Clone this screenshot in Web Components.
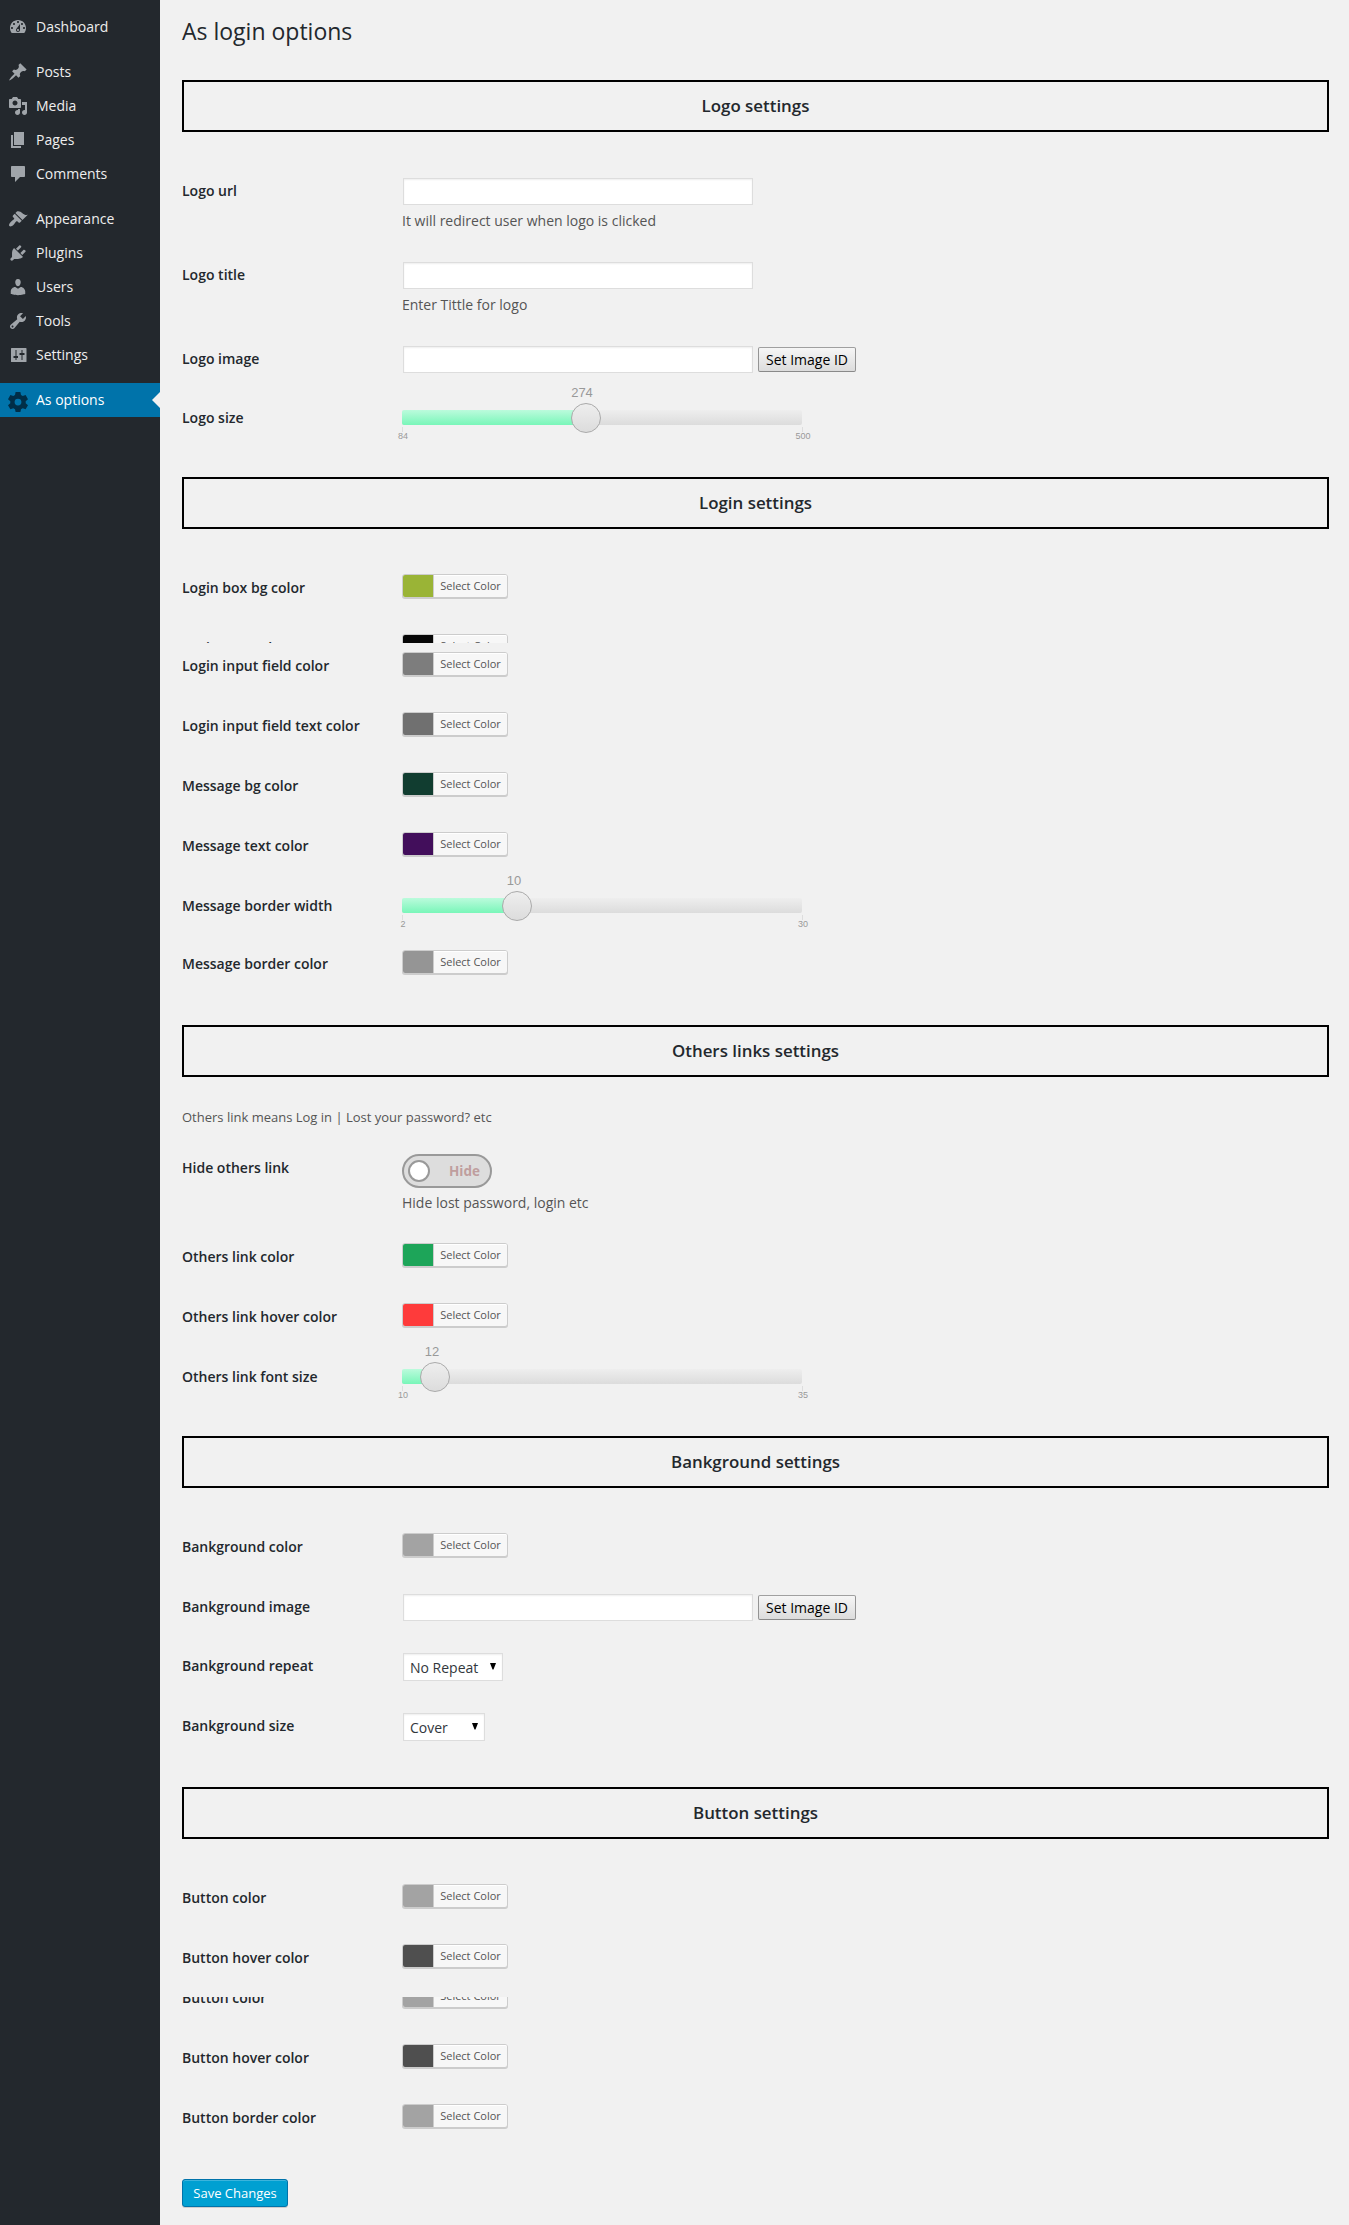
<!DOCTYPE html>
<html lang="en">
<head>
<meta charset="utf-8">
<title>As login options</title>
<style>
html,body{margin:0;padding:0}
body{background:#f1f1f1;font:14px/18px "Open Sans",sans-serif;color:#23282d}
</style>
</head>
<body>
<admin-page></admin-page>
<script>
const define=(name,css,html,setup)=>customElements.define(name,class extends HTMLElement{
  constructor(){
    super();
    this.attachShadow({mode:'open'});
  }
  connectedCallback(){
    if(this.shadowRoot.firstChild)return;
    this.shadowRoot.innerHTML='<style>*{box-sizing:border-box}'+css+'</style>'+(typeof html==='function'?html(this):html);
    if(setup)setup(this,this.shadowRoot);
  }
});

const ICONS={
dashboard:'M3.76 16h12.48c1.1-1.37 1.76-3.11 1.76-5 0-4.42-3.58-8-8-8s-8 3.58-8 8c0 1.89.66 3.63 1.76 5zM10 4c.55 0 1 .45 1 1s-.45 1-1 1-1-.45-1-1 .45-1 1-1zM6 6c.55 0 1 .45 1 1s-.45 1-1 1-1-.45-1-1 .45-1 1-1zm8 0c.55 0 1 .45 1 1s-.45 1-1 1-1-.45-1-1 .45-1 1-1zm-5.37 5.55L12 7v6c0 1.1-.9 2-2 2s-2-.9-2-2c0-.57.24-1.08.63-1.45zM4 10c.55 0 1 .45 1 1s-.45 1-1 1-1-.45-1-1 .45-1 1-1zm12 0c.55 0 1 .45 1 1s-.45 1-1 1-1-.45-1-1 .45-1 1-1zm-5 3c0-.55-.45-1-1-1s-1 .45-1 1 .45 1 1 1 1-.45 1-1z',
post:'M10.44 3.02l1.82-1.82 6.36 6.35-1.83 1.82c-1.05-.68-2.48-.57-3.41.36l-.75.75c-.92.93-1.04 2.35-.35 3.41l-1.83 1.82-2.41-2.41-2.8 2.79c-.42.42-3.38 2.71-3.8 2.29s1.86-3.39 2.28-3.81l2.79-2.79L4.1 9.36l1.83-1.82c1.05.69 2.48.57 3.4-.36l.75-.75c.93-.92 1.05-2.35.36-3.41z',
media:'M13 11V4c0-.55-.45-1-1-1h-1.67L9 1H5L3.67 3H2c-.55 0-1 .45-1 1v7c0 .55.45 1 1 1h10c.55 0 1-.45 1-1zM7 4.5c1.38 0 2.5 1.12 2.5 2.5S8.38 9.5 7 9.5 4.5 8.38 4.5 7 5.62 4.5 7 4.5zM14 6h5v10.5c0 1.38-1.12 2.5-2.5 2.5S14 17.88 14 16.5s1.12-2.5 2.5-2.5c.17 0 .34.02.5.05V9h-3V6zm-4 8.05V13h2v3.5c0 1.38-1.12 2.5-2.5 2.5S7 17.88 7 16.5 8.12 14 9.5 14c.17 0 .34.02.5.05z',
page:'M6 15V2h10v13H6zm-1 1h8v2H3V5h2v11z',
comments:'M4 2h12c.55 0 1 .45 1 1v9c0 .55-.45 1-1 1h-4l-5 5v-5H4c-.55 0-1-.45-1-1V3c0-.55.45-1 1-1z',
appearance:'M14.48 11.06L7.41 3.99l1.5-1.5c.5-.56 2.3-.47 3.51.32 1.21.8 1.43 1.28 2.91 2.1 1.18.64 2.45 1.26 4.45.85zm-.71.71L6.7 4.7 4.93 6.47c-.39.39-.39 1.02 0 1.41l1.06 1.06c.39.39.39 1.03 0 1.42-.6.6-1.43 1.11-2.21 1.69-.35.26-.7.53-1.01.84C1.43 14.23.4 16.08 1.4 17.07c.99 1 2.84-.03 4.18-1.36.31-.31.58-.66.85-1.02.57-.78 1.08-1.61 1.69-2.21.39-.39 1.02-.39 1.41 0l1.06 1.06c.39.39 1.02.39 1.41 0z',
plugins:'M13.11 4.36L9.87 7.6 8 5.73l3.24-3.24c.35-.34 1.05-.2 1.56.32.52.51.66 1.21.31 1.55zm-8 1.77l.91-1.12 9.01 9.01-1.19.84c-.71.71-2.63 1.16-3.82 1.16H6.14L4.9 17.26c-.59.59-1.54.59-2.12 0-.59-.58-.59-1.53 0-2.12l1.24-1.24v-3.88c0-1.13.4-3.19 1.09-3.89zm7.26 3.97l3.24-3.24c.34-.35 1.04-.21 1.55.31.52.51.66 1.21.31 1.55l-3.24 3.25z',
users:'M10 9.25c-2.27 0-2.73-3.44-2.73-3.44C7 4.02 7.82 2 9.97 2c2.16 0 2.98 2.02 2.71 3.81 0 0-.41 3.44-2.68 3.44zm0 2.57L12.72 10c2.39 0 4.52 2.33 4.52 4.53v2.49s-3.65 1.13-7.24 1.13c-3.65 0-7.24-1.13-7.24-1.13v-2.49c0-2.25 1.94-4.48 4.47-4.48z',
tools:'M16.68 9.77c-1.34 1.34-3.3 1.67-4.95.99l-5.41 6.52c-.99.99-2.59.99-3.58 0s-.99-2.59 0-3.57l6.52-5.42c-.68-1.65-.35-3.61.99-4.95 1.28-1.28 3.12-1.62 4.72-1.06l-2.89 2.89 2.82 2.82 2.86-2.87c.53 1.58.18 3.39-1.08 4.65zM3.81 16.21c.4.39 1.04.39 1.43 0 .4-.4.4-1.04 0-1.43-.39-.4-1.03-.4-1.43 0-.39.39-.39 1.03 0 1.43z',
settings:'M18.500 16.400V3.600c0-.35-.25-.6-.6-.6H3.600c-.35 0-.6.25-.6.6v12.800c0 .35.25.6.6.6h14.300c.35 0 .6-.25.6-.6zM8.500 11h1.500v2H8.500v2H7.500v-2H5.500v-2h2V5h1v6zm6-3h2v2h-2v5h-1v-5h-2V8h2V5h1v3z',
gear:'M7.6 0h4.8l.6 3 1.7 1 2.9-1L20 7.2 17.7 9.200v2L20 13.200l-2.400 4.100-2.900-1-1.700 1L12.400 20H7.600L7 17.300l-1.700-1-2.900 1L0 13.200l2.300-2v-2L0 7.200 2.400 3l2.900 1L7 3zM10 6.700a3.400 3.400 0 1 0 0 6.800 3.400 3.400 0 0 0 0-6.800z'
};

define('menu-item',`
:host{display:flex;height:34px;align-items:flex-start;padding:7px 0 0 8px;box-sizing:border-box;color:#eee;--ic:#a0a5aa}
:host([gap]){margin-top:11px}
:host([active]){background:#0073aa;color:#fff;--ic:#002e48}
svg{width:20px;height:20px;fill:var(--ic);flex:none;display:block}
:host([active]) svg{margin-top:2px}
span{margin-left:8px;line-height:20px;flex:1}
i{display:none;width:0;height:0;border:8px solid transparent;border-right-color:#f1f1f1;border-left:0;margin-top:2px}
:host([active]) i{display:block}`,
e=>`<svg viewBox="0 0 20 20"><path fill-rule="evenodd" d="${ICONS[e.getAttribute('icon')]}"/></svg><span><slot></slot></span><i></i>`);

define('side-menu',`
:host{display:block;width:160px;flex:none;background:#23282d;padding-top:10px;box-sizing:border-box}`,
`<menu-item icon="dashboard">Dashboard</menu-item>
<menu-item icon="post" gap>Posts</menu-item>
<menu-item icon="media">Media</menu-item>
<menu-item icon="page">Pages</menu-item>
<menu-item icon="comments">Comments</menu-item>
<menu-item icon="appearance" gap>Appearance</menu-item>
<menu-item icon="plugins">Plugins</menu-item>
<menu-item icon="users">Users</menu-item>
<menu-item icon="tools">Tools</menu-item>
<menu-item icon="settings">Settings</menu-item>
<menu-item icon="gear" gap active>As options</menu-item>`);

define('option-section',`
:host{display:block;margin-bottom:31px}
h3{margin:0 0 29px;height:52px;border:2px solid #000;font-size:16.9px;line-height:48px;font-weight:600;text-align:center}
:host([note]) h3{margin-bottom:28px}
p{margin:0;height:33px;font-size:13px;line-height:24px;color:#555}`,
e=>`<h3>${e.getAttribute('heading')}</h3>${e.hasAttribute('note')?`<p>${e.getAttribute('note')}</p>`:''}<slot></slot>`);

define('option-row',`
:host{display:flow-root;height:60px}
:host([cut]){overflow:hidden}
div{display:flex;margin-top:var(--shift,0)}
label{width:220px;flex:none;padding-top:21px;font-weight:600}
section{padding-top:16px;flex:1}`,
e=>`<div><label>${e.getAttribute('label')}</label><section><slot></slot></section></div>`,
e=>{if(e.hasAttribute('h'))e.style.height=e.getAttribute('h')+'px';});

define('text-field',`
:host{display:block;padding:1px}
div{display:flex;gap:5px;align-items:flex-start}
input{width:350px;height:27px;margin:0;border:1px solid #ddd;background:#fff;box-shadow:inset 0 1px 2px rgba(0,0,0,.07);padding:3px 5px}
button{width:98px;height:25px;padding:0;margin:1px 0 0;border:1px solid;border-color:#a0a0a0 #949494 #8a8a8a #949494;border-radius:2px;background:linear-gradient(#f6f6f6,#dcdcdc);font:14px/20px "Open Sans",sans-serif;color:#000;white-space:nowrap}
p{margin:6px 0 0 -1px;line-height:20px;color:#555}`,
e=>`<div><input type="text">${e.hasAttribute('button')?`<button>${e.getAttribute('button')}</button>`:''}</div>${e.hasAttribute('hint')?`<p>${e.getAttribute('hint')}</p>`:''}`);

define('color-button',`
:host{display:block}
div{display:flex;width:106px;height:24px;border:1px solid #ccc;border-radius:3px;box-shadow:0 1px 0 #ccc;background:#f7f7f7}
b{width:30px;border-radius:2px 0 0 2px}
span{flex:1;border-left:1px solid #ccc;border-radius:0 2px 2px 0;box-shadow:inset 0 1px 0 #fff;text-align:center;font-size:11px;line-height:22px;color:#555;white-space:nowrap}`,
e=>`<div><b style="background:${e.getAttribute('value')}"></b><span>Select Color</span></div>`);

define('range-slider',`
:host{display:block;width:400px;padding-top:6px}
.track{position:relative;height:15px;border-radius:2px;background:linear-gradient(#eee,#dcdcdc);font-family:"Liberation Sans",Arial,sans-serif;color:#999}
.fill{height:15px;border-radius:2px 0 0 2px;background:linear-gradient(#bbfbdc,#79f6b9)}
.knob{position:absolute;top:-7px;width:30px;height:30px;border:1px solid #aaa;border-radius:50%;background:linear-gradient(#eee,#dcdcdc)}
.val{position:absolute;top:-25px;font-size:13px;line-height:16px;transform:translateX(-50%)}
.ends{display:flex;justify-content:space-between;margin:2px -31px 0 -29px;font-size:9px;line-height:10px}
.ends span{width:60px;text-align:center;padding-top:4px;background:linear-gradient(#ddd,#ddd) 29px 0/1px 5px no-repeat}`,
e=>{const g=n=>e.getAttribute(n),x=+g('x');
return `<div class="track"><div class="fill" style="width:${x+15}px"></div><div class="knob" style="left:${x}px"></div><div class="val" style="left:${g('vx')}px">${g('value')}</div><div class="ends"><span>${g('min')}</span><span>${g('max')}</span></div></div>`});

define('toggle-switch',`
:host{display:block}
div{display:flex;align-items:center;width:90px;height:34px;border:2px solid #999;border-radius:17px;background:#ddd;padding:0 10px 0 4px;justify-content:space-between}
i{width:22px;height:22px;border:2px solid #999;border-radius:50%;background:#fff}
b{font-size:13.5px;color:#bf9e9e}
p{margin:5px 0 0;line-height:20px;color:#555}`,
`<div><i></i><b>Hide</b></div><p><slot></slot></p>`);

define('drop-down',`
:host{display:block;padding:1px}
div{display:flex;align-items:center;justify-content:space-between;height:28px;border:1px solid #ddd;background:#fff;box-shadow:inset 0 1px 2px rgba(0,0,0,.07);padding:2px 6px 0;color:#32373c}
svg{width:6px;height:7px;display:block;margin-top:-3px}`,
e=>`<div style="width:${e.getAttribute('w')}px"><span><slot></slot></span><svg viewBox="0 0 6 7"><path d="M0 0h6L3.500 6.500h-1z"/></svg></div>`);

define('save-button',`
:host{display:block}
button{display:block;width:106px;height:28px;margin:0;padding:0;border:1px solid #0073aa;border-radius:3px;background:#00a0d2;box-shadow:inset 0 1px 0 rgba(120,200,230,.5),0 1px 0 rgba(0,0,0,.15);color:#fff;font:500 13px/26px "Open Sans",sans-serif}`,
`<button><slot></slot></button>`);

define('admin-page',`
:host{display:flex;width:1349px;height:2225px;overflow:hidden}
main{flex:1;padding:0 20px 0 22px;min-width:0}
h1{margin:0;height:80px;padding-top:17px;font-size:23px;line-height:29px;font-weight:400}`,
`<side-menu></side-menu>
<main>
<h1>As login options</h1>
<option-section heading="Logo settings">
 <option-row label="Logo url" h="84"><text-field hint="It will redirect user when logo is clicked"></text-field></option-row>
 <option-row label="Logo title" h="84"><text-field hint="Enter Tittle for logo"></text-field></option-row>
 <option-row label="Logo image" h="59"><text-field button="Set Image ID"></text-field></option-row>
 <option-row label="Logo size" h="58"><range-slider min="84" max="500" value="274" x="169" vx="180"></range-slider></option-row>
</option-section>
<option-section heading="Login settings">
 <option-row label="Login box bg color"><color-button value="#9ab436"></color-button></option-row>
 <option-row label="Login text color" h="25" cut><color-button value="#070707"></color-button></option-row>
 <option-row label="Login input field color" h="53" style="--shift:-7px"><color-button value="#7d7d7d"></color-button></option-row>
 <option-row label="Login input field text color"><color-button value="#707070"></color-button></option-row>
 <option-row label="Message bg color"><color-button value="#113d30"></color-button></option-row>
 <option-row label="Message text color"><color-button value="#420e5b"></color-button></option-row>
 <option-row label="Message border width" h="58"><range-slider min="2" max="30" value="10" x="100" vx="112"></range-slider></option-row>
 <option-row label="Message border color"><color-button value="#959595"></color-button></option-row>
</option-section>
<option-section heading="Others links settings" note="Others link means Log in | Lost your password? etc">
 <option-row label="Hide others link" h="89"><toggle-switch>Hide lost password, login etc</toggle-switch></option-row>
 <option-row label="Others link color"><color-button value="#1da559"></color-button></option-row>
 <option-row label="Others link hover color"><color-button value="#fe3b3b"></color-button></option-row>
 <option-row label="Others link font size" h="58"><range-slider min="10" max="35" value="12" x="18" vx="30"></range-slider></option-row>
</option-section>
<option-section heading="Bankground settings">
 <option-row label="Bankground color"><color-button value="#a3a3a3"></color-button></option-row>
 <option-row label="Bankground image" h="59"><text-field button="Set Image ID"></text-field></option-row>
 <option-row label="Bankground repeat"><drop-down w="100">No Repeat</drop-down></option-row>
 <option-row label="Bankground size"><drop-down w="82">Cover</drop-down></option-row>
</option-section>
<option-section heading="Button settings">
 <option-row label="Button color"><color-button value="#a3a3a3"></color-button></option-row>
 <option-row label="Button hover color" h="69"><color-button value="#4f4f4f"></color-button></option-row>
 <option-row label="Button color" h="31" cut style="--shift:-29px"><color-button value="#a3a3a3"></color-button></option-row>
 <option-row label="Button hover color"><color-button value="#4f4f4f"></color-button></option-row>
 <option-row label="Button border color"><color-button value="#a3a3a3"></color-button></option-row>
</option-section>
<save-button>Save Changes</save-button>
</main>`);
</script>
</body>
</html>
